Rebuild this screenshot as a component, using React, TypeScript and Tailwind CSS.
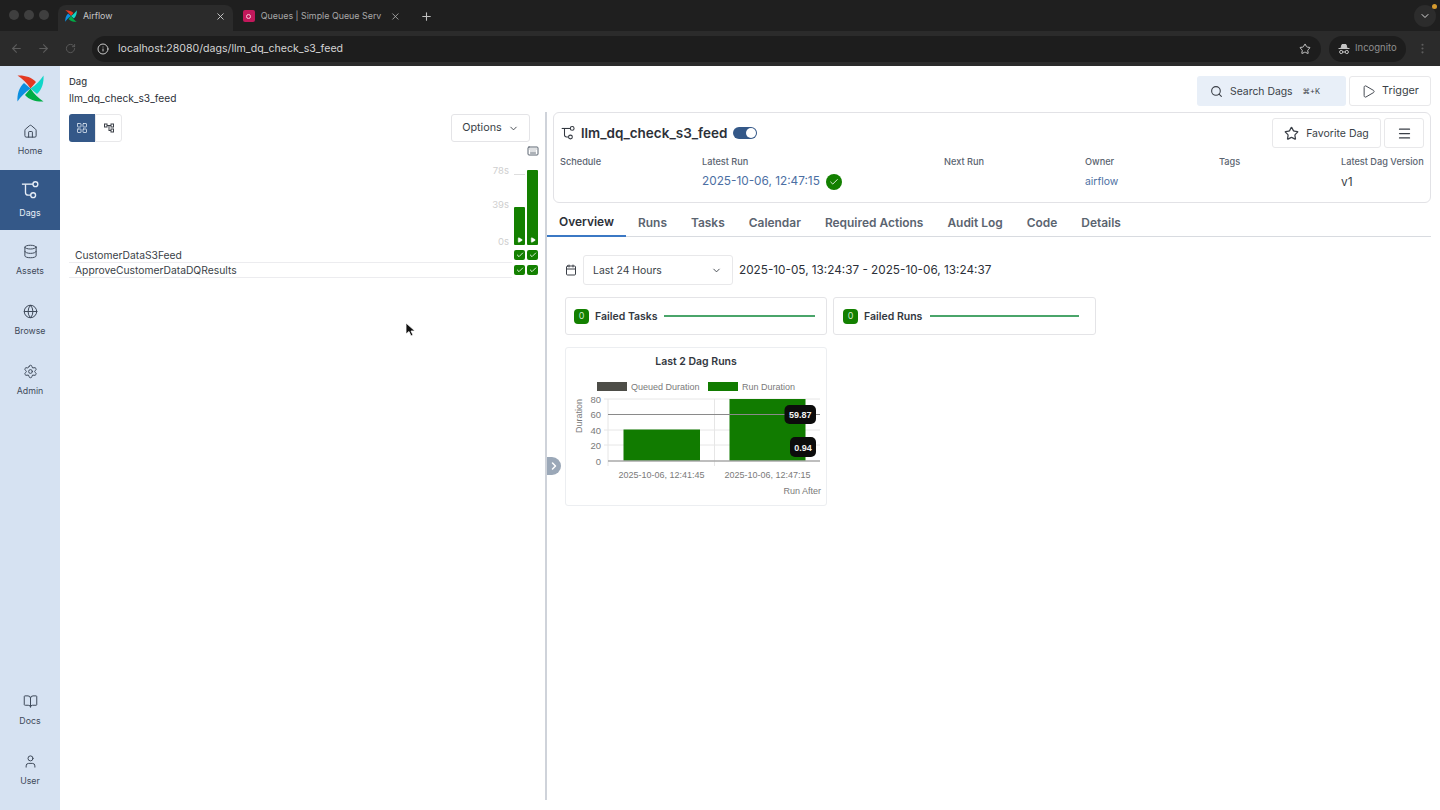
import React from "react";
import { ArrowLeft, ArrowRight, BookOpen, Calendar, Check, ChevronDown, ChevronRight, Database, EllipsisVertical, Globe, House, Info, Keyboard, LayoutGrid, Menu, Play, Plus, RotateCw, Search, Settings, Star, User, X } from "lucide-react";
import { MdOutlineAccountTree } from "react-icons/md";

function Logo({ size = 27 }: { size?: number }) {
  const blade = "M0.5 0.5 C7 0 15 2 19 7 L13.5 13.5 C10 8 5 3.5 0.5 0.5 Z";
  return (
    <svg width={size} height={size} viewBox="0 0 27 27">
      <path d={blade} fill="#e43921" />
      <path d={blade} fill="#11d6c8" transform="rotate(90 13.5 13.5)" />
      <path d={blade} fill="#00ad46" transform="rotate(180 13.5 13.5)" />
      <path d={blade} fill="#0c8fe0" transform="rotate(270 13.5 13.5)" />
    </svg>
  );
}

function Incognito() {
  return (
    <svg width="12" height="12" viewBox="0 0 12 12" fill="none" stroke="#c4c4c4" strokeWidth="1">
      <path d="M3 5 L4 1.5 H8 L9 5" fill="#c4c4c4" />
      <path d="M0.5 5.5 H11.5" />
      <circle cx="3.2" cy="9" r="1.6" />
      <circle cx="8.8" cy="9" r="1.6" />
      <path d="M4.8 9 H7.2" />
    </svg>
  );
}

function DagIcon({ size = 20, className = "" }: { size?: number; className?: string }) {
  return (
    <svg width={size} height={size} viewBox="0 0 20 20" fill="none" stroke="currentColor" strokeWidth="1.5" className={className}>
      <path d="M1 3.5 H13.5" />
      <path d="M5 3.5 V13 C5 15 6.5 15.7 8 15.7 H11" />
      <circle cx="16" cy="3.5" r="2.7" />
      <circle cx="13.5" cy="15.7" r="2.7" />
    </svg>
  );
}

function Nav({ icon, label, active }: { icon: React.ReactNode; label: string; active?: boolean }) {
  return (
    <div className={`h-[60px] flex flex-col items-center justify-center text-[8.8px] leading-[12px] ${active ? "bg-[#345888] text-[#e6edf6] gap-[8px]" : "text-[#3f4a5a] gap-[6px]"}`}>
      {icon}
      <span>{label}</span>
    </div>
  );
}

function Tick() {
  return (
    <span className="flex items-center justify-center w-[11px] h-[10px] rounded-[2px] bg-[#138000]">
      <Check size={8} strokeWidth={2.5} className="text-white" />
    </span>
  );
}

function Row({ name }: { name: string }) {
  return (
    <div className="flex h-[15px] items-center">
      <div className="w-[443px] h-[15px] pl-[6px] text-[10.3px] leading-[15px] text-[#3a3f47] border-b border-[#ececef]">{name}</div>
      <div className="flex gap-[2px] ml-[2px] pb-[2px]">
        <Tick />
        <Tick />
      </div>
    </div>
  );
}

function Meta({ label, children }: { label: string; children?: React.ReactNode }) {
  return (
    <div className="flex flex-col">
      <div className="text-[9.2px] leading-[14px] font-medium whitespace-nowrap text-[#5b6470]">{label}</div>
      <div className="mt-[3px] h-[20px] flex items-center">{children}</div>
    </div>
  );
}

function FailedCard({ label, lineClass, widthClass }: { label: string; lineClass: string; widthClass: string }) {
  return (
    <div className={`h-[38px] flex items-center border border-[#e4e4e7] rounded-[3px] ${widthClass}`}>
      <span className="flex items-center justify-center w-[15px] h-[15px] rounded-[4px] bg-[#138000] text-[9px] text-[#cfe9c8]">0</span>
      <span className="ml-[6px] pt-[1px] text-[10.5px] font-semibold text-[#33383f]">{label}</span>
      <div className={`h-[2px] bg-[#4aa56a] ${lineClass}`} />
    </div>
  );
}

function RunChart() {
  const g = "#e6e6e6";
  const t = "#7a7a7a";
  const X = (v: number) => v - 565;
  const Y = (v: number) => v - 347;
  const font = '"Liberation Sans", Arial, sans-serif';
  return (
    <svg width="260" height="133" viewBox="1 26 260 133" className="block" fontFamily={font}>
      <rect x={X(597)} y={Y(382)} width="30" height="9" fill="#4d4d47" />
      <text x={X(631)} y={Y(390)} fontSize="9" fill={t}>Queued Duration</text>
      <rect x={X(708)} y={Y(382)} width="30" height="9" fill="#117b00" />
      <text x={X(742)} y={Y(390)} fontSize="9" fill={t}>Run Duration</text>
      {[399, 430, 445].map((y) => (
        <line key={y} x1={X(604)} x2={X(820)} y1={Y(y)} y2={Y(y)} stroke={g} />
      ))}
      {[608, 714.5].map((x) => (
        <line key={x} x1={X(x)} x2={X(x)} y1={Y(399)} y2={Y(466)} stroke={g} />
      ))}
      <rect x={X(623.5)} y={Y(429.5)} width="76.5" height="31.5" fill="#117b00" />
      <rect x={X(729.5)} y={Y(399)} width="76" height="62" fill="#117b00" />
      <line x1={X(608)} x2={X(820)} y1={Y(414.5)} y2={Y(414.5)} stroke="#8a8a8a" />
      <line x1={X(608)} x2={X(820)} y1={Y(461)} y2={Y(461)} stroke="#a8a8a8" strokeWidth="1.5" />
      {[["80", 399], ["60", 414.5], ["40", 430], ["20", 445.5], ["0", 461]].map(([l, y]) => (
        <text key={String(l)} x={X(601)} y={Y(Number(y) + 3.5)} fontSize="9.5" textAnchor="end" fill={t}>{l}</text>
      ))}
      <text transform={`translate(${X(582)} ${Y(416)}) rotate(-90)`} fontSize="9" textAnchor="middle" fill={t}>Duration</text>
      <text x={X(661.5)} y={Y(478)} fontSize="9" textAnchor="middle" fill={t}>2025-10-06, 12:41:45</text>
      <text x={X(767.5)} y={Y(478)} fontSize="9" textAnchor="middle" fill={t}>2025-10-06, 12:47:15</text>
      <text x={X(821)} y={Y(494)} fontSize="9" textAnchor="end" fill={t}>Run After</text>
      <rect x={X(784.5)} y={Y(405)} width="31.5" height="19" rx="5" fill="#0c0c0c" />
      <text x={X(800.2)} y={Y(418)} fontSize="9" fontWeight="700" textAnchor="middle" fill="#f2f2f2">59.87</text>
      <rect x={X(790)} y={Y(437)} width="26" height="20" rx="5" fill="#0c0c0c" />
      <text x={X(803)} y={Y(450.5)} fontSize="9" fontWeight="700" textAnchor="middle" fill="#f2f2f2">0.94</text>
    </svg>
  );
}

function Browser() {
  return (
    <div className="shrink-0">
      <div className="h-[31px] bg-[#1f1f1f] flex items-end relative">
        <div className="flex gap-[5px] pl-[9px] pb-[11px] pr-[9px]">
          <span className="w-[10px] h-[10px] rounded-full bg-[#3f3f3f]" />
          <span className="w-[10px] h-[10px] rounded-full bg-[#3f3f3f]" />
          <span className="w-[10px] h-[10px] rounded-full bg-[#3f3f3f]" />
        </div>
        <div className="w-[175px] h-[26px] bg-[#2b2b2b] rounded-t-[8px] flex items-center pl-[7px] pr-[7px] pb-[4px]">
          <Logo size={12} />
          <span className="ml-[6px] text-[8.8px] text-[#c7c7c7] flex-1">Airflow</span>
          <X size={11} className="text-[#d0d0d0]" />
        </div>
        <div className="w-[176px] h-[26px] flex items-center pl-[10px] pr-[8px] pb-[4px]">
          <span className="w-[12px] h-[12px] rounded-[2px] bg-[#c2185b] flex items-center justify-center">
            <span className="w-[5px] h-[5px] rounded-full border border-[#f7c6d9]" />
          </span>
          <span className="ml-[6px] w-[126px] whitespace-nowrap text-[8.9px] text-[#a8a8a8]">Queues | Simple Queue Serv</span>
          <X size={11} className="ml-[6px] text-[#a8a8a8]" />
        </div>
        <div className="h-[26px] flex items-center ml-[11px] pb-[4px]">
          <Plus size={13} className="text-[#c0c0c0]" />
        </div>
        <div className="absolute right-[4px] top-[5px] w-[22px] h-[22px] rounded-full bg-[#2c2c2c] flex items-center justify-center">
          <ChevronDown size={12} className="text-[#d8d8d8]" />
          <span className="absolute right-[-1px] top-[-1px] w-[5px] h-[5px] rounded-full bg-[#d59a2f]" />
        </div>
      </div>
      <div className="h-[35px] bg-[#2b2b2b] flex items-center pl-[10px] pr-[11px]">
        <ArrowLeft size={13} className="text-[#5c5c5c]" />
        <ArrowRight size={13} className="ml-[14px] text-[#5c5c5c]" />
        <RotateCw size={11} className="ml-[15px] text-[#5c5c5c]" />
        <div className="ml-[16px] flex-1 h-[26px] rounded-full bg-[#1d1d1d] flex items-center pl-[5px] pr-[10px]">
          <Info size={12} className="text-[#c9c9c9]" />
          <span className="ml-[9px] text-[10.6px] text-[#d4d4d4] flex-1">localhost:28080/dags/llm_dq_check_s3_feed</span>
          <Star size={12} className="text-[#c9c9c9]" />
        </div>
        <div className="ml-[8px] w-[77px] h-[26px] rounded-full bg-[#1d1d1d] flex items-center pl-[9px]">
          <Incognito />
          <span className="ml-[5px] text-[9.5px] text-[#8f8f8f]">Incognito</span>
        </div>
        <EllipsisVertical size={13} className="ml-[10px] text-[#5c5c5c]" />
      </div>
    </div>
  );
}

function Sidebar() {
  const ic = "text-inherit";
  return (
    <div className="w-[60px] shrink-0 bg-[#d6e2f2] flex flex-col">
      <div className="h-[44px] flex items-center justify-center pt-[1px]">
        <Logo />
      </div>
      <Nav icon={<House size={15} strokeWidth={1.6} className={ic} />} label="Home" />
      <Nav active icon={<DagIcon size={18} className={ic} />} label="Dags" />
      <Nav icon={<Database size={15} strokeWidth={1.6} className={ic} />} label="Assets" />
      <Nav icon={<Globe size={15} strokeWidth={1.6} className={ic} />} label="Browse" />
      <Nav icon={<Settings size={15} strokeWidth={1.6} className={ic} />} label="Admin" />
      <div className="flex-1" />
      <Nav icon={<BookOpen size={15} strokeWidth={1.6} className={ic} />} label="Docs" />
      <Nav icon={<User size={15} strokeWidth={1.6} className={ic} />} label="User" />
      <div className="h-[10px]" />
    </div>
  );
}

function GridPane() {
  return (
    <div className="w-[485px] shrink-0 pl-[9px] pr-[7px] relative">
      <div className="flex justify-between items-center h-[28px] mt-[2px] pr-[8px]">
        <div className="flex">
          <div className="w-[26px] h-[28px] bg-[#345888] rounded-l-[3px] flex items-center justify-center">
            <LayoutGrid size={12} className="text-[#dfe8f3]" strokeWidth={1.6} />
          </div>
          <div className="w-[27px] h-[28px] border border-[#e8e8ea] rounded-r-[3px] flex items-center justify-center">
            <MdOutlineAccountTree size={12} className="text-[#3a3f47]" />
          </div>
        </div>
        <div className="w-[79px] h-[28px] pt-[1px] border border-[#e4e4e7] rounded-[3px] flex items-center justify-center gap-[6px] text-[10.8px] text-[#3a3f47]">
          Options
          <ChevronDown size={11} />
        </div>
      </div>
      <div className="flex justify-end mt-[3px] h-[12px] -mr-[1px]">
        <Keyboard size={12} className="text-[#5b6470]" />
      </div>
      <div className="flex justify-end items-stretch h-[76px] mt-[12px]">
        <div className="flex flex-col items-end text-[9.5px] text-[#cfcfcf] pr-[4px] leading-[10px]">
          <span className="-mt-[3px]">78s</span>
          <span className="mt-[24px]">39s</span>
          <span className="mt-[27px]">0s</span>
        </div>
        <div className="flex items-stretch gap-[2px] ml-[1px]">
          <div className="w-[11px] flex flex-col justify-between">
            <div className="mt-[5px] h-px bg-[#dedede]" />
            <div className="h-[38px] bg-[#138000] rounded-[1px] flex items-end justify-center pb-[2px]">
              <Play size={6} className="text-white" fill="white" />
            </div>
          </div>
          <div className="w-[11px] flex flex-col justify-end">
            <div className="h-[75px] bg-[#138000] rounded-[1px] flex items-end justify-center pb-[2px]">
              <Play size={6} className="text-white" fill="white" />
            </div>
          </div>
        </div>
      </div>
      <div className="mt-[3px] flex flex-col">
        <Row name="CustomerDataS3Feed" />
        <Row name="ApproveCustomerDataDQResults" />
      </div>
      <svg width="12" height="16" viewBox="0 0 12 16" className="absolute left-[345px] top-[210px]">
        <path d="M1 1 L1 12 L4 9.5 L6 14 L8 13 L6 9 L10 9 Z" fill="#111" stroke="#fff" strokeWidth="0.8" />
      </svg>
    </div>
  );
}

function DetailPane() {
  const tabs = ["Runs", "Tasks", "Calendar", "Required Actions", "Audit Log", "Code", "Details"];
  return (
    <div className="flex-1 min-w-0 pr-[9px]">
      <div className="ml-[6px] h-[91px] border border-[#e2e2e6] rounded-[6px] pl-[6px] pr-[6px] pt-[5px]">
        <div className="flex items-center h-[30px]">
          <DagIcon size={14} className="ml-[1px] text-[#333840]" />
          <span className="ml-[6px] text-[13.5px] font-semibold text-[#2c3038]">llm_dq_check_s3_feed</span>
          <span className="ml-[6px] w-[24px] h-[12px] rounded-full bg-[#345888] flex items-center justify-end pr-[1px]">
            <span className="w-[10px] h-[10px] rounded-full bg-white" />
          </span>
          <div className="flex-1" />
          <div className="w-[109px] h-[30px] pt-[1px] border border-[#e8e8ea] rounded-[3px] flex items-center justify-center gap-[7px] text-[10.5px] text-[#3a3f47]">
            <Star size={15} />
            Favorite Dag
          </div>
          <div className="ml-[3px] w-[40px] h-[30px] border border-[#e8e8ea] rounded-[3px] flex items-center justify-center">
            <Menu size={15} className="text-[#3a3f47]" />
          </div>
        </div>
        <div className="grid grid-cols-[142px_242px_141px_134px_122px_auto] mt-[7px]">
          <Meta label="Schedule" />
          <Meta label="Latest Run">
            <span className="text-[11.8px] text-[#4c6fa3]">2025-10-06, 12:47:15</span>
            <span className="ml-[6px] w-[16px] h-[16px] rounded-full bg-[#138000] flex items-center justify-center">
              <Check size={10} className="text-white" />
            </span>
          </Meta>
          <Meta label="Next Run" />
          <Meta label="Owner">
            <span className="text-[10.4px] text-[#4c6fa3]">airflow</span>
          </Meta>
          <Meta label="Tags" />
          <Meta label="Latest Dag Version">
            <span className="text-[12px] text-[#3a3f47]">v1</span>
          </Meta>
        </div>
      </div>
      <div className="mt-[5px] h-[29px] flex border-b border-[#d8dbe0] text-[11.95px] font-semibold text-[#5b6470]">
        <div className="h-[29px] px-[12px] flex items-center text-[#2c3038] border-b-2 border-[#3b78c4]">Overview</div>
        {tabs.map((t) => (
          <div key={t} className="h-[29px] px-[12px] flex items-center">{t}</div>
        ))}
      </div>
      <div className="pl-[18px] pt-[18px]">
        <div className="flex items-center h-[30px]">
          <Calendar size={12} className="text-[#3a3f47]" />
          <div className="ml-[6px] w-[150px] h-[30px] pt-[1px] border border-[#e8e8ea] rounded-[3px] flex items-center justify-between pl-[9px] pr-[10px] text-[10.4px] text-[#3a3f47]">
            Last 24 Hours
            <ChevronDown size={11} />
          </div>
          <span className="ml-[6px] pt-[1px] text-[11.76px] text-[#2c3038]">2025-10-05, 13:24:37 - 2025-10-06, 13:24:37</span>
        </div>
        <div className="flex gap-[6px] mt-[12px]">
          <FailedCard label="Failed Tasks" lineClass="ml-[6px] w-[151px]" widthClass="pl-[8px] w-[262px]" />
          <FailedCard label="Failed Runs" lineClass="ml-[8px] w-[149px]" widthClass="pl-[9px] w-[263px]" />
        </div>
        <div className="mt-[12px] w-[262px] h-[159px] border border-[#eceef1] rounded-[3px]">
          <div className="h-[18px] mt-[5px] mb-[2px] text-center text-[10.5px] font-semibold leading-[18px] text-[#33383f]">Last 2 Dag Runs</div>
          <RunChart />
        </div>
      </div>
    </div>
  );
}

export default function App() {
  return (
    <div className="w-[1440px] h-[810px] overflow-hidden flex flex-col bg-white font-['Inter',sans-serif]">
      <Browser />
      <div className="flex-1 flex min-h-0">
        <Sidebar />
        <div className="flex-1 flex flex-col min-w-0">
          <div className="h-[46px] shrink-0 flex pl-[9px] pr-[9px]">
            <div className="pt-[10px]">
              <div className="text-[9.5px] leading-[12px] font-medium text-[#3a3f47]">Dag</div>
              <div className="text-[10.2px] leading-[14px] mt-[3px] text-[#2c3038]">llm_dq_check_s3_feed</div>
            </div>
            <div className="flex-1" />
            <div className="mt-[10px] w-[149px] h-[30px] pt-[1px] rounded-[3px] bg-[#e8eff8] flex items-center pl-[13px] text-[10.4px] text-[#3a3f47]">
              <Search size={13} />
              <span className="ml-[7px]">Search Dags</span>
              <span className="ml-[10px] text-[7.5px]">⌘+K</span>
            </div>
            <div className="ml-[3px] mt-[10px] w-[82px] h-[30px] pt-[1px] border border-[#e8e8ea] rounded-[3px] flex items-center justify-center gap-[6px] text-[10.8px] text-[#3a3f47]">
              <Play size={15} strokeWidth={1.5} />
              Trigger
            </div>
          </div>
          <div className="flex-1 flex min-h-0 relative">
            <GridPane />
            <div className="w-[2px] h-[688px] bg-[#cfd3da] shrink-0" />
            <DetailPane />
            <div className="absolute left-[487px] top-[345px] w-[14px] h-[18px] bg-[#9ba8b8] rounded-r-full flex items-center justify-center">
              <ChevronRight size={12} strokeWidth={3} className="text-white" />
            </div>
          </div>
        </div>
      </div>
    </div>
  );
}
